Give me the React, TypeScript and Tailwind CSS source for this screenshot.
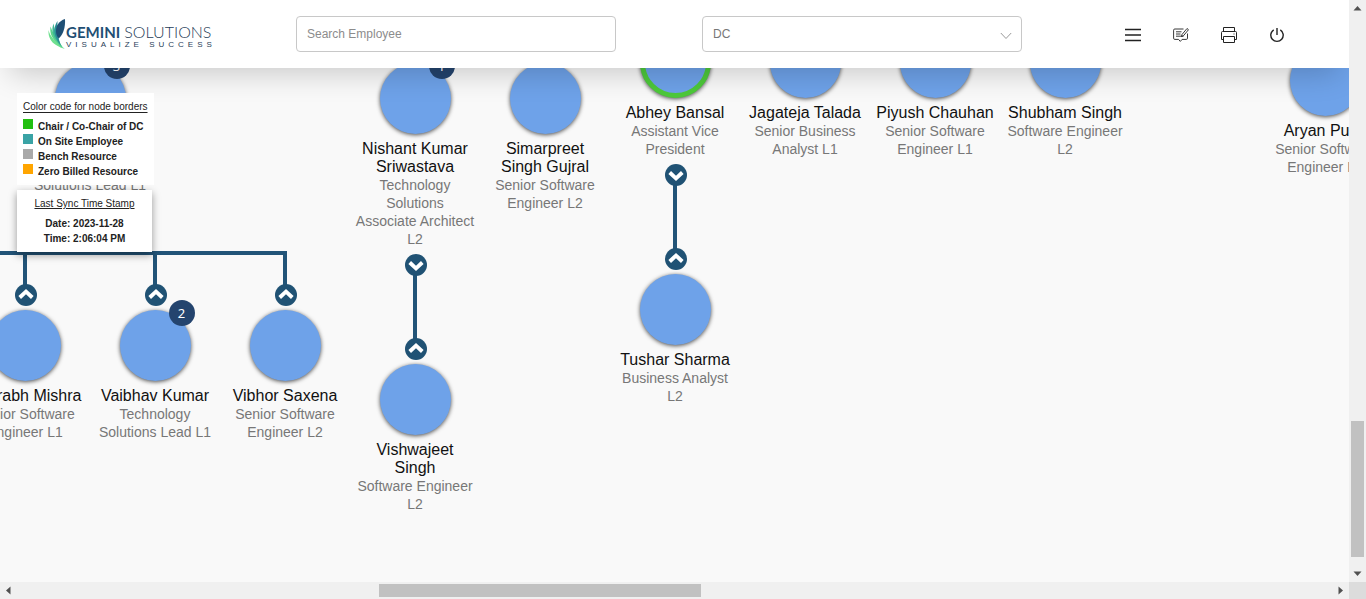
import React from "react";

type Person = {
  x: number;
  y: number;
  name: string;
  title: string;
  count?: number;
  chair?: boolean;
};

const people: Person[] = [
  { x: 90, y: 63, name: "Rohit Sharma", title: "Technology Solutions Lead L1", count: 3 },
  { x: 415, y: 63, name: "Nishant Kumar Sriwastava", title: "Technology Solutions Associate Architect L2", count: 1 },
  { x: 545, y: 63, name: "Simarpreet Singh Gujral", title: "Senior Software Engineer L2" },
  { x: 675, y: 27, name: "Abhey Bansal", title: "Assistant Vice President", chair: true },
  { x: 805, y: 27, name: "Jagateja Talada", title: "Senior Business Analyst L1" },
  { x: 935, y: 27, name: "Piyush Chauhan", title: "Senior Software Engineer L1" },
  { x: 1065, y: 27, name: "Shubham Singh", title: "Software Engineer L2" },
  { x: 1325, y: 45, name: "Aryan Punit", title: "Senior Software Engineer L1" },
  { x: 25, y: 310, name: "Saurabh Mishra", title: "Senior Software Engineer L1" },
  { x: 155, y: 310, name: "Vaibhav Kumar", title: "Technology Solutions Lead L1", count: 2 },
  { x: 285, y: 310, name: "Vibhor Saxena", title: "Senior Software Engineer L2" },
  { x: 415, y: 364, name: "Vishwajeet Singh", title: "Software Engineer L2" },
  { x: 675, y: 274, name: "Tushar Sharma", title: "Business Analyst L2" },
];

const toggles: { x: number; y: number; up: boolean }[] = [
  { x: 26, y: 295, up: true },
  { x: 156, y: 295, up: true },
  { x: 286, y: 295, up: true },
  { x: 416, y: 265, up: false },
  { x: 416, y: 349, up: true },
  { x: 676, y: 175, up: false },
  { x: 676, y: 259, up: true },
];

const legend = [
  { color: "bg-[#22bf10]", label: "Chair / Co-Chair of DC" },
  { color: "bg-[#3aa3a5]", label: "On Site Employee" },
  { color: "bg-[#a9a9a9]", label: "Bench Resource" },
  { color: "bg-[#ffa500]", label: "Zero Billed Resource" },
];

function Logo() {
  return (
    <a href="#" className="flex items-end text-[#1f3d58]" aria-label="Gemini Solutions">
      <svg viewBox="0 0 18 32" className="h-8 w-[18px] shrink-0">
        <path d="M.5 12C0 19 3 24 8 27c3 2 6 3 9 4-2-1-4-3-6-5C6 22 2 18 .5 12z" fill="#6fe08f" />
        <path d="M2.500 8.500C1.500 15 4 20 8 24c3 3 5 5 8 6.500C12 26 6 18 2.500 8.500z" fill="#5bd48c" />
        <path d="M5.500 5.500C3 12 5 18 8.500 22.500c2 3 4 5 6 7C11 23 7 14 5.500 5.500z" fill="#3fb894" />
        <path d="M9.500 3C6 8 5.500 14 8 19.500c1 3 3 5.500 4.500 7.500C10 20 9 11 9.500 3z" fill="#2a8f96" />
        <path d="M17 1C11 3 8 7.500 8 13c0 3 .8 5 2.700 7.500C15.500 16 17.500 9 17 1z" fill="#1f4f74" />
      </svg>
      <span className="flex flex-col font-['Lato',sans-serif]">
        <span className="text-base leading-4 whitespace-nowrap">
          <b className="text-[15px] font-bold text-[#1f4f74]">GEMINI</b> <span className="font-light">SOLUTIONS</span>
        </span>
        <span className="font-['Liberation_Sans',sans-serif] text-[8px] leading-[10px] tracking-[4px] whitespace-nowrap">
          VISUALIZE SUCCESS
        </span>
      </span>
    </a>
  );
}

function Header() {
  return (
    <header className="relative z-10 flex h-[68px] shrink-0 items-center bg-white pr-14 pl-12 shadow-[0_15px_30px_-10px_rgba(0,0,0,0.2)]">
      <div className="w-[248px] shrink-0">
        <Logo />
      </div>
      <input
        type="text"
        aria-label="Search Employee"
        placeholder="Search Employee"
        className="h-9 w-80 rounded border border-[#c8c8c8] bg-white px-2.5 text-xs text-[#777] placeholder:text-[#8c8c8c] placeholder:opacity-100"
      />
      <div className="relative ml-[86px] w-80">
        <select
          aria-label="Department"
          className="h-9 w-full appearance-none rounded border border-[#c8c8c8] bg-white px-2.5 text-xs text-[#777]"
        >
          <option>DC</option>
        </select>
        <svg viewBox="0 0 12 8" className="pointer-events-none absolute top-4 right-2.5 h-2 w-3" fill="none" stroke="#999">
          <path d="M.8 1 6 6.500 11.200 1" />
        </svg>
      </div>
      <nav className="ml-auto flex items-center gap-4 pt-0.5 text-[#222]">
        <button aria-label="Menu" className="grid size-8 place-items-center">
          <svg viewBox="0 0 16 16" className="size-4" stroke="currentColor" strokeWidth="1.300">
            <path d="M0 2.500h16M0 8h16M0 13.500h16" />
          </svg>
        </button>
        <button aria-label="Feedback" className="grid size-8 place-items-center">
          <svg viewBox="0 0 16 16" className="size-4" fill="none" stroke="currentColor" strokeWidth=".9">
            <path d="M10.500 2H1.800Q.6 2 .6 3.200v8Q.6 12.400 1.800 12.400h3.700l1.800 2 1.800-2h4.200q1.200 0 1.200-1.200V6.500" />
            <path d="m9 7.500 5-6 1.500 1.200-5 6-2 .8zM3 4.800h5.500M3 7h4.500M3 9.200h7.500" />
          </svg>
        </button>
        <button aria-label="Print" className="grid size-8 place-items-center">
          <svg viewBox="0 0 16 16" className="size-4" fill="none" stroke="currentColor">
            <path d="M2.500 4.500v-4h11v4M2.500 12.500h-2v-7q0-1 1-1h13q1 0 1 1v7h-2M2.500 9.500h11v6h-11zM12.500 7h1" />
          </svg>
        </button>
        <button aria-label="Log out" className="grid size-8 place-items-center">
          <svg viewBox="0 0 16 16" className="size-4" fill="none" stroke="currentColor" strokeWidth="1.400">
            <path d="M8 1v7M4.700 2.900a6.200 6.200 0 1 0 6.600 0" />
          </svg>
        </button>
      </nav>
    </header>
  );
}

function Node({ person }: { person: Person }) {
  return (
    <div
      className="absolute w-[120px] -translate-x-1/2 text-center leading-[18px]"
      style={{ left: person.x, top: person.y - 68 }}
    >
      <div
        className={
          person.chair
            ? "relative mx-auto size-[71px] rounded-full border-[5px] border-[#4dc93a] bg-[#6ea2e9] shadow-[0_1px_4px_rgba(0,0,0,0.7)]"
            : "relative mx-auto size-[71px] rounded-full bg-[#6ea2e9] shadow-[0_1px_4px_rgba(0,0,0,0.7)]"
        }
      >
        {person.count !== undefined && (
          <span className="absolute -top-2.5 -right-1 grid size-[26px] place-items-center rounded-full bg-[#24446e] font-['Noto_Sans',sans-serif] text-[13px] text-white">
            {person.count}
          </span>
        )}
      </div>
      <p className="mt-1.5 text-base leading-[18px] text-[#111]">{person.name}</p>
      <p className="text-sm leading-[18px] text-[#777]">{person.title}</p>
    </div>
  );
}

function Toggle({ x, y, up }: { x: number; y: number; up: boolean }) {
  return (
    <button
      aria-label={up ? "Collapse upwards" : "Collapse downwards"}
      className="absolute size-[22px] -translate-x-1/2 -translate-y-1/2"
      style={{ left: x, top: y - 68 }}
    >
      <svg viewBox="0 0 22 22" className="size-full">
        <circle cx="11" cy="11" r="11" fill="#205274" />
        <path
          d={up ? "m4.700 13.500 6.300-6 6.300 6" : "m4.700 8.500 6.300 6 6.300-6"}
          fill="none"
          stroke="#fff"
          strokeWidth="3.800"
        />
      </svg>
    </button>
  );
}

function Chart() {
  return (
    <main className="relative min-h-0 flex-1 overflow-hidden bg-[#f9f9f9]">
      <svg className="absolute inset-0 size-full" fill="none" stroke="#225478" strokeWidth="4">
        <path d="M0 185H287M25 185v32M155 185v32M285 185v32M415 202v72M675 112v72" />
      </svg>
      {people.map((p) => (
        <Node key={p.name} person={p} />
      ))}
      {toggles.map((t) => (
        <Toggle key={`${t.x}-${t.y}`} {...t} />
      ))}
      <aside className="absolute top-[25px] left-[17px] z-20 flex flex-col items-start gap-[5px] text-[10px] leading-[15px] text-[#222]">
        <section className="bg-white p-1.5">
          <h2 className="mb-[5px] underline underline-offset-2">Color code for node borders</h2>
          <ul>
            {legend.map((l) => (
              <li key={l.label} className="flex gap-[5px] font-bold">
                <span className={`size-2.5 ${l.color}`} />
                {l.label}
              </li>
            ))}
          </ul>
        </section>
        <section className="w-[135px] bg-white py-1.5 text-center shadow-[0_3px_8px_rgba(0,0,0,0.4)]">
          <h2 className="mb-[5px] underline">Last Sync Time Stamp</h2>
          <p className="font-bold">Date: 2023-11-28</p>
          <p className="font-bold">Time: 2:06:04 PM</p>
        </section>
      </aside>
    </main>
  );
}

function Arrow({ d }: { d: string }) {
  return (
    <svg viewBox="0 0 17 17" className="size-[17px] shrink-0" fill="#505050">
      <path d={d} />
    </svg>
  );
}

export default function App() {
  return (
    <div className="grid h-screen grid-cols-[minmax(0,1fr)_17px] grid-rows-[minmax(0,1fr)_17px] overflow-hidden font-['Liberation_Sans',Arial,sans-serif]">
      <div className="flex min-h-0 flex-col overflow-hidden">
        <Header />
        <Chart />
      </div>
      <div className="flex flex-col items-center bg-[#f0f0f0]">
        <Arrow d="M8.500 6 12.500 10.500h-8z" />
        <div className="grow-[404]" />
        <div className="w-[13px] grow-[136] bg-[#c1c1c1]" />
        <div className="grow-[8]" />
        <Arrow d="M8.500 11 12.500 6.500h-8z" />
      </div>
      <div className="flex items-center bg-[#f0f0f0]">
        <Arrow d="M6 8.500 10.500 4.500v8z" />
        <div className="grow-[362]" />
        <div className="h-[13px] grow-[322] bg-[#c1c1c1]" />
        <div className="grow-[631]" />
        <Arrow d="M11 8.500 6.500 4.500v8z" />
      </div>
      <div className="bg-[#dcdcdc]" />
    </div>
  );
}
